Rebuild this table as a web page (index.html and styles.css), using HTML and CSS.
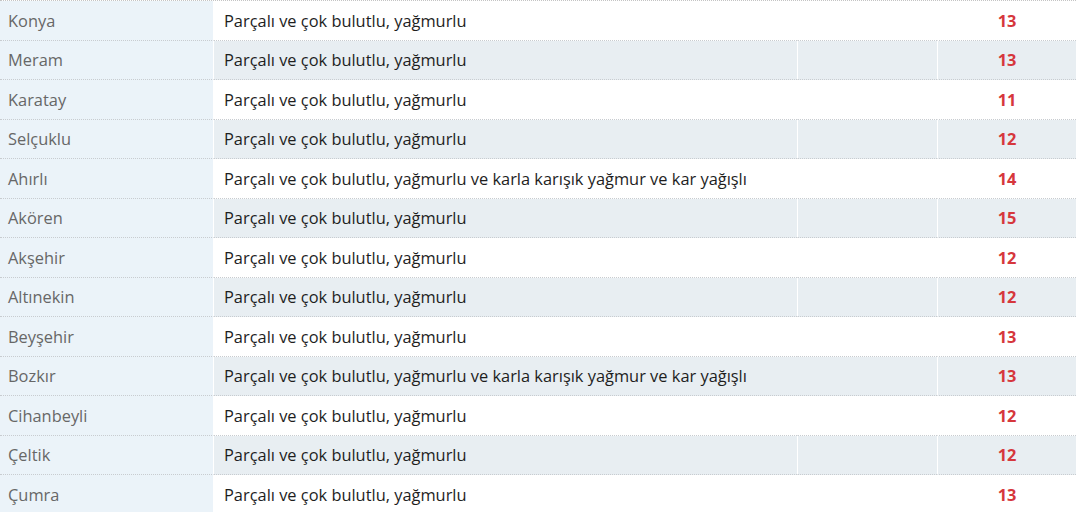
FILE: index.html
```html
<!DOCTYPE html>
<html lang="tr">
<head>
<meta charset="utf-8">
<title>Konya hava durumu</title>
<link rel="stylesheet" href="styles.css">
</head>
<body>
<table class="weather">
  <colgroup>
    <col class="c-place"><col class="c-desc"><col class="c-extra"><col class="c-temp">
  </colgroup>
  <tbody>
    <tr><td class="place">Konya</td><td class="desc">Parçalı ve çok bulutlu, yağmurlu</td><td class="extra"></td><td class="temp">13</td></tr>
    <tr class="alt"><td class="place">Meram</td><td class="desc">Parçalı ve çok bulutlu, yağmurlu</td><td class="extra"></td><td class="temp">13</td></tr>
    <tr><td class="place">Karatay</td><td class="desc">Parçalı ve çok bulutlu, yağmurlu</td><td class="extra"></td><td class="temp">11</td></tr>
    <tr class="alt"><td class="place">Selçuklu</td><td class="desc">Parçalı ve çok bulutlu, yağmurlu</td><td class="extra"></td><td class="temp">12</td></tr>
    <tr><td class="place">Ahırlı</td><td class="desc wide" colspan="2">Parçalı ve çok bulutlu, yağmurlu ve karla karışık yağmur ve kar yağışlı</td><td class="temp">14</td></tr>
    <tr class="alt"><td class="place">Akören</td><td class="desc">Parçalı ve çok bulutlu, yağmurlu</td><td class="extra"></td><td class="temp">15</td></tr>
    <tr><td class="place">Akşehir</td><td class="desc">Parçalı ve çok bulutlu, yağmurlu</td><td class="extra"></td><td class="temp">12</td></tr>
    <tr class="alt"><td class="place">Altınekin</td><td class="desc">Parçalı ve çok bulutlu, yağmurlu</td><td class="extra"></td><td class="temp">12</td></tr>
    <tr><td class="place">Beyşehir</td><td class="desc">Parçalı ve çok bulutlu, yağmurlu</td><td class="extra"></td><td class="temp">13</td></tr>
    <tr class="alt"><td class="place">Bozkır</td><td class="desc wide" colspan="2">Parçalı ve çok bulutlu, yağmurlu ve karla karışık yağmur ve kar yağışlı</td><td class="temp">13</td></tr>
    <tr><td class="place">Cihanbeyli</td><td class="desc">Parçalı ve çok bulutlu, yağmurlu</td><td class="extra"></td><td class="temp">12</td></tr>
    <tr class="alt"><td class="place">Çeltik</td><td class="desc">Parçalı ve çok bulutlu, yağmurlu</td><td class="extra"></td><td class="temp">12</td></tr>
    <tr><td class="place">Çumra</td><td class="desc">Parçalı ve çok bulutlu, yağmurlu</td><td class="extra"></td><td class="temp">13</td></tr>
  </tbody>
</table>
</body>
</html>
```

FILE: styles.css
```css
html, body {
  margin: 0;
  padding: 0;
  background: #ffffff;
}

body {
  font-family: "Open Sans", "Noto Sans", "Liberation Sans", sans-serif;
  font-size: 16.4px;
}

.weather {
  width: 1076px;
  table-layout: fixed;
  border-collapse: separate;
  border-spacing: 0;
  border-top: 1px dotted #c4c4c4;
}

.c-place { width: 214px; }
.c-desc { width: 583px; }
.c-extra { width: 140px; }
.c-temp { width: 139px; }

.weather td {
  height: 39.5px;
  padding: 0;
  border-bottom: 1px dotted #c8ccd0;
  vertical-align: middle;
  white-space: nowrap;
  box-sizing: border-box;
}

.place {
  background: #ebf3f9;
  color: #676767;
  padding-left: 8px !important;
  border-right: 1px solid #ffffff;
}

.desc {
  color: #1e1e1e;
  padding-left: 10px !important;
}

.temp {
  color: #d6373c;
  font-weight: 700;
  text-align: center;
  border-left: 1px solid #ffffff;
}

.extra {
  border-left: 1px solid #ffffff;
}

.alt .desc,
.alt .extra,
.alt .temp {
  background: #e8eef2;
}
```
